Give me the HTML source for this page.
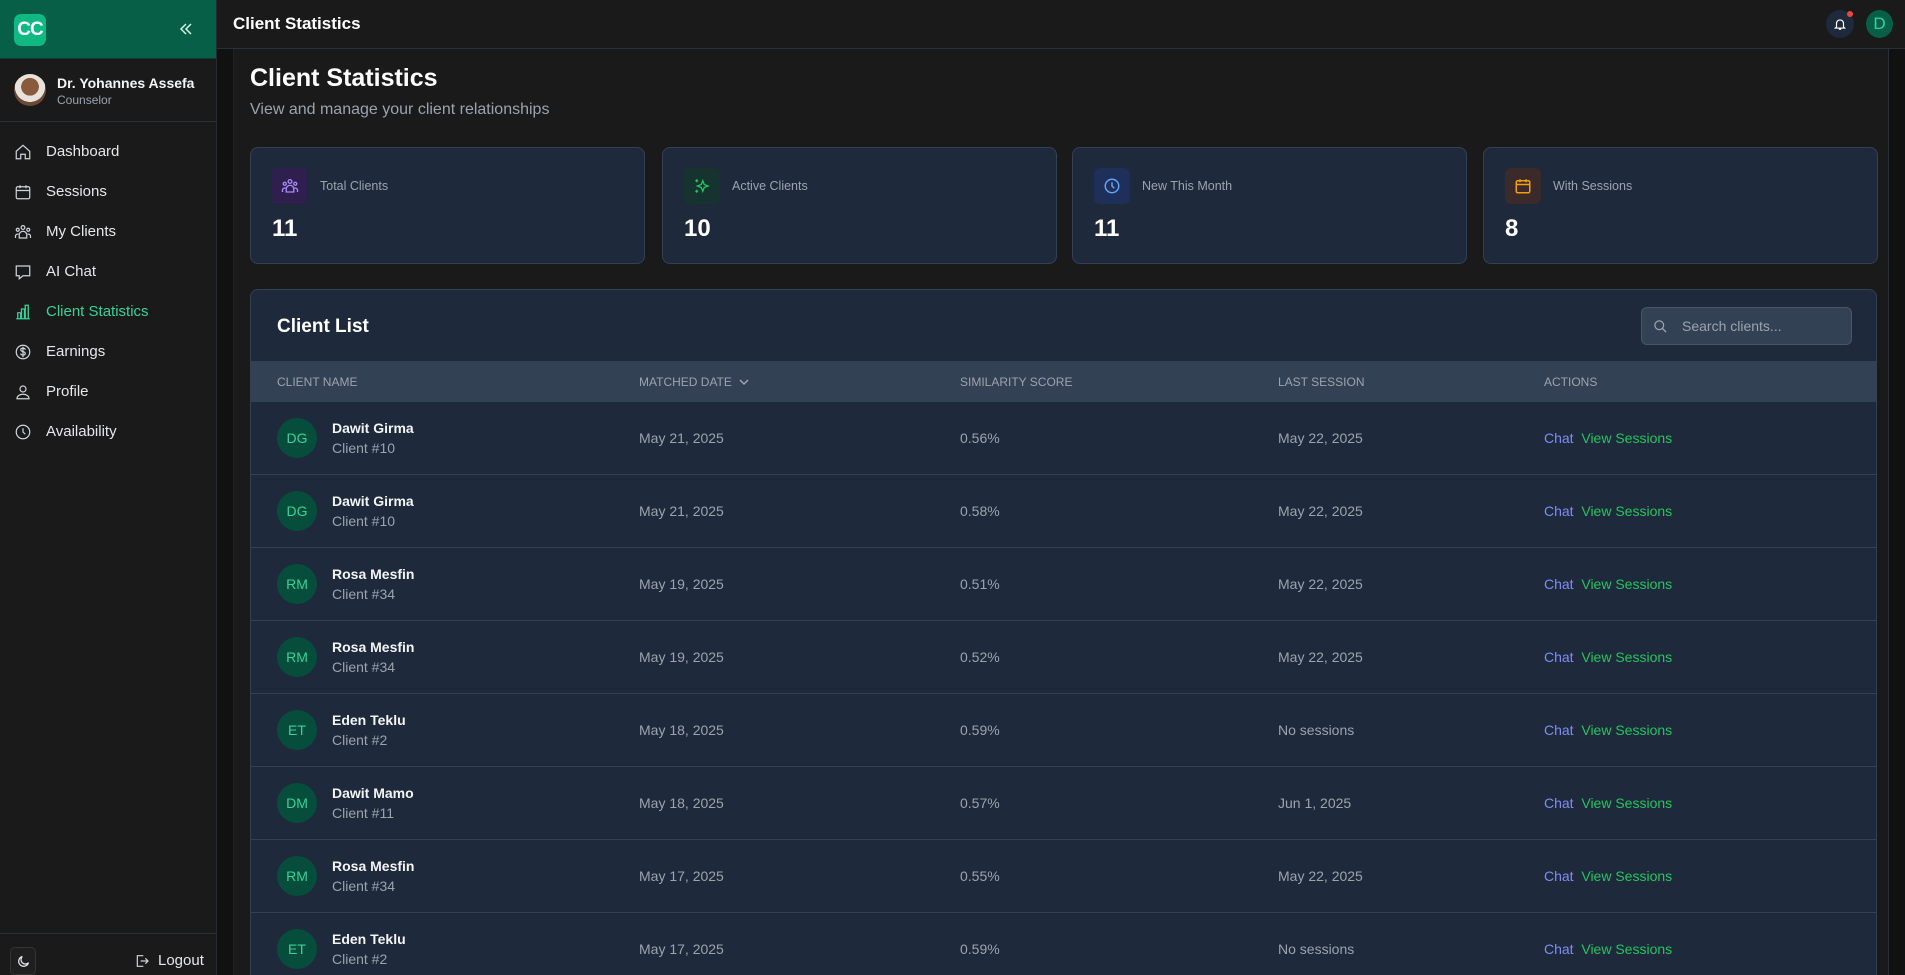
<!DOCTYPE html>
<html style="overflow:hidden;height:975px"><head><meta charset="utf-8">
<style>
*{box-sizing:border-box;margin:0;padding:0}
body{width:1905px;height:975px;overflow:hidden;background:#111111;font-family:"Liberation Sans",sans-serif;color:#e5e7eb;position:relative}
.sb{position:absolute;left:0;top:0;width:217px;height:975px;background:#1a1a1a;border-right:1px solid #262b33}
.sbh{height:59px;background:#065f46;position:relative;border-bottom:1px solid #0b3d2e}
.logo{position:absolute;left:14px;top:14px;width:32px;height:32px;border-radius:7px;background:#10b981;color:#fff;font-weight:bold;font-size:19px;line-height:32px;text-align:center;letter-spacing:-1px}
.prof{position:absolute;left:0;top:59px;width:216px;height:63px;border-bottom:1px solid #2a2f38}
.av{position:absolute;left:14px;top:15px;width:32px;height:32px;border-radius:50%;background:radial-gradient(circle at 50% 40%,#8a5a3c 0 35%,#e8e2dc 36% 60%,#6b4a36 61%)}
.pn{position:absolute;left:57px;top:16px;font-size:14px;font-weight:bold;color:#f3f4f6}
.pr{position:absolute;left:57px;top:34px;font-size:12px;color:#9ca3af}
.nav{position:absolute;left:0;width:216px;height:40px;font-size:15px;color:#e5e7eb}
.nav svg{position:absolute;left:14px;top:11px}
.nav span{position:absolute;left:46px;top:11px}
.nav.act{color:#34d399}
.top{position:absolute;left:217px;top:0;width:1688px;height:49px;background:#1a1a1a;border-bottom:1px solid #2a2f38}
.top h1{position:absolute;left:16px;top:14px;font-size:17px;font-weight:bold;color:#fff}
.bell{position:absolute;left:1609px;top:10px;width:28px;height:28px;border-radius:50%;background:#1e293b}
.dot{position:absolute;left:1630px;top:11px;width:6px;height:6px;border-radius:50%;background:#ef4444}
.uav{position:absolute;left:1649px;top:10px;width:27px;height:28px;border-radius:50%;background:#065f46;color:#34d399;font-size:17px;text-align:center;line-height:28px}
.main{position:absolute;left:233px;top:49px;width:1656px;height:926px;background:#1a1a1a;border-left:1px solid #222;border-right:1px solid #2a2f38}
.card{position:absolute;top:147px;width:395px;height:117px;background:#1e293b;border:1px solid #334155;border-radius:8px}
.ib{position:absolute;left:21px;top:20px;width:36px;height:36px;border-radius:6px}
.ib svg{position:absolute;left:9px;top:9px}
.cl{position:absolute;left:69px;top:31px;font-size:12.5px;color:#9ca3af}
.cn{position:absolute;left:21px;top:67px;font-size:24px;font-weight:bold;color:#fff}
.panel{position:absolute;left:250px;top:289px;width:1627px;height:686px;background:#1e293b;border:1px solid #334155;border-bottom:none;border-radius:8px 8px 0 0;overflow:hidden}
.th{position:absolute;left:0;top:71px;width:100%;height:41px;background:#334155;font-size:12px;color:#9ca3af;text-transform:uppercase}
.th div{position:absolute;top:14px}
.row{position:absolute;left:0;width:100%;height:73px;border-bottom:1px solid #334155;font-size:14px;color:#9ca3af}
.ra{position:absolute;left:26px;top:16px;width:40px;height:40px;border-radius:50%;background:#064e3b;color:#34d399;font-size:14px;text-align:center;line-height:40px}
.rn{position:absolute;left:81px;top:18px;color:#f3f4f6;font-weight:bold;font-size:14px}
.rc{position:absolute;left:81px;top:38px;font-size:14px}
.c{position:absolute;top:28px}
.chat{color:#818cf8}.vs{color:#22c55e}
</style></head><body>
<div class="sb">
 <div class="sbh"><div class="logo">CC</div>
  <svg style="position:absolute;left:178px;top:21px" width="16" height="16" viewBox="0 0 16 16" fill="none" stroke="#d1fae5" stroke-width="1.5"><path d="M8 3L3 8l5 5M13 3L8 8l5 5"/></svg></div>
 <div class="prof"><div class="av"></div><div class="pn">Dr. Yohannes Assefa</div><div class="pr">Counselor</div></div>
 <div class="nav" style="top:132px"><svg width="18" height="18" viewBox="0 0 24 24" fill="none" stroke="#d1d5db" stroke-width="1.6"><path d="M3 11l9-8 9 8v10h-6v-6h-6v6H3z"/></svg><span>Dashboard</span></div>
 <div class="nav" style="top:172px"><svg width="18" height="18" viewBox="0 0 24 24" fill="none" stroke="#d1d5db" stroke-width="1.6"><rect x="3" y="5" width="18" height="16" rx="2"/><path d="M8 3v4M16 3v4M3 10h18"/></svg><span>Sessions</span></div>
 <div class="nav" style="top:212px"><svg width="18" height="18" viewBox="0 0 24 24" fill="none" stroke="#d1d5db" stroke-width="1.6"><circle cx="12" cy="6" r="2.5"/><circle cx="5" cy="9" r="2"/><circle cx="19" cy="9" r="2"/><path d="M7 20v-4a5 5 0 0110 0v4zM2 20v-3a3 3 0 014-2M22 20v-3a3 3 0 00-4-2"/></svg><span>My Clients</span></div>
 <div class="nav" style="top:252px"><svg width="18" height="18" viewBox="0 0 24 24" fill="none" stroke="#d1d5db" stroke-width="1.6"><path d="M3 4h18v13h-9l-5 4v-4H3z"/><path d="M8 10h.01M12 10h.01M16 10h.01"/></svg><span>AI Chat</span></div>
 <div class="nav act" style="top:292px"><svg width="18" height="18" viewBox="0 0 24 24" fill="none" stroke="#34d399" stroke-width="1.8"><path d="M3 21h18M5 21v-8h4v8M10 21V8h4v13M15 21V3h4v18"/></svg><span>Client Statistics</span></div>
 <div class="nav" style="top:332px"><svg width="18" height="18" viewBox="0 0 24 24" fill="none" stroke="#d1d5db" stroke-width="1.6"><circle cx="12" cy="12" r="9"/><path d="M15 9c0-1-1-2-3-2s-3 1-3 2 1 2 3 2.5 3 1.5 3 2.5-1 2-3 2-3-1-3-2M12 5v14"/></svg><span>Earnings</span></div>
 <div class="nav" style="top:372px"><svg width="18" height="18" viewBox="0 0 24 24" fill="none" stroke="#d1d5db" stroke-width="1.6"><circle cx="12" cy="8" r="4"/><path d="M4 21c0-4 4-6 8-6s8 2 8 6z"/></svg><span>Profile</span></div>
 <div class="nav" style="top:412px"><svg width="18" height="18" viewBox="0 0 24 24" fill="none" stroke="#d1d5db" stroke-width="1.6"><circle cx="12" cy="12" r="9"/><path d="M12 7v5l3 3"/></svg><span>Availability</span></div>
 <div style="position:absolute;left:0;top:933px;width:216px;border-top:1px solid #2a2f38"></div>
 <div style="position:absolute;left:10px;top:947px;width:26px;height:28px;border:1px solid #333;border-radius:5px;background:#1f1f1f"><svg style="position:absolute;left:5px;top:6px" width="15" height="15" viewBox="0 0 24 24" fill="none" stroke="#e5e7eb" stroke-width="2"><path d="M20 14A8 8 0 1110 4a6 6 0 0010 10z"/></svg></div>
 <svg style="position:absolute;left:134px;top:953px" width="16" height="16" viewBox="0 0 24 24" fill="none" stroke="#d1d5db" stroke-width="1.8"><path d="M14 4H5v16h9M10 12h11M17 8l4 4-4 4"/></svg>
 <div style="position:absolute;left:158px;top:952px;font-size:15px;color:#e5e7eb">Logout</div>
</div>
<div class="top"><h1>Client Statistics</h1>
 <div class="bell"><svg style="position:absolute;left:7px;top:7px" width="14" height="14" viewBox="0 0 24 24" fill="none" stroke="#fff" stroke-width="2"><path d="M6 17V11a6 6 0 0112 0v6l2 2H4zM10 21h4"/></svg></div>
 <div class="dot"></div><div class="uav">D</div></div>
<div class="main"></div>
<div style="position:absolute;left:250px;top:64px;font-size:25px;font-weight:bold;color:#fff">Client Statistics</div>
<div style="position:absolute;left:250px;top:101px;font-size:16px;color:#9ca3af">View and manage your client relationships</div>

<div class="card" style="left:250px"><div class="ib" style="background:#2e1f4f"><svg width="18" height="18" viewBox="0 0 24 24" fill="none" stroke="#a78bfa" stroke-width="1.8"><circle cx="12" cy="6" r="2.5"/><circle cx="5" cy="9" r="2"/><circle cx="19" cy="9" r="2"/><path d="M7 20v-4a5 5 0 0110 0v4zM2 20v-3a3 3 0 014-2M22 20v-3a3 3 0 00-4-2"/></svg></div><div class="cl">Total Clients</div><div class="cn">11</div></div>
<div class="card" style="left:662px"><div class="ib" style="background:#16332f"><svg width="18" height="18" viewBox="0 0 24 24" fill="none" stroke="#22c55e" stroke-width="1.8"><path d="M13 5l2 5 5 2-5 2-2 5-2-5-5-2 5-2zM5 3v4M3 5h4M5 17v4M3 19h4"/></svg></div><div class="cl">Active Clients</div><div class="cn">10</div></div>
<div class="card" style="left:1072px"><div class="ib" style="background:#1e2f5a"><svg width="18" height="18" viewBox="0 0 24 24" fill="none" stroke="#60a5fa" stroke-width="2"><circle cx="12" cy="12" r="9"/><path d="M12 7v5l3 3"/></svg></div><div class="cl">New This Month</div><div class="cn">11</div></div>
<div class="card" style="left:1483px"><div class="ib" style="background:#3a2a2a"><svg width="18" height="18" viewBox="0 0 24 24" fill="none" stroke="#f59e0b" stroke-width="2"><rect x="3" y="5" width="18" height="16" rx="2"/><path d="M8 3v4M16 3v4M3 10h18"/></svg></div><div class="cl">With Sessions</div><div class="cn">8</div></div>

<div class="panel">
 <div style="position:absolute;left:26px;top:26px;font-size:19px;font-weight:bold;color:#fff">Client List</div>
 <div style="position:absolute;left:1390px;top:17px;width:211px;height:38px;background:#334155;border:1px solid #475569;border-radius:6px">
  <svg style="position:absolute;left:11px;top:11px" width="15" height="15" viewBox="0 0 24 24" fill="none" stroke="#9ca3af" stroke-width="2"><circle cx="10" cy="10" r="7"/><path d="M15 15l6 6"/></svg>
  <div style="position:absolute;left:40px;top:10px;font-size:14px;color:#9ca3af">Search clients...</div></div>
 <div class="th"><div style="left:26px">Client Name</div><div style="left:388px">Matched Date <svg width="12" height="10" viewBox="0 0 12 10" fill="none" stroke="#9ca3af" stroke-width="1.5" style="vertical-align:-1px;margin-left:3px"><path d="M2 3l4 4 4-4"/></svg></div><div style="left:709px">Similarity Score</div><div style="left:1027px">Last Session</div><div style="left:1293px">Actions</div></div>
 <div class="row" style="top:112px"><div class="ra">DG</div><div class="rn">Dawit Girma</div><div class="rc">Client #10</div><div class="c" style="left:388px">May 21, 2025</div><div class="c" style="left:709px">0.56%</div><div class="c" style="left:1027px">May 22, 2025</div><div class="c" style="left:1293px"><span class="chat">Chat</span>&nbsp; <span class="vs">View Sessions</span></div></div>
 <div class="row" style="top:185px"><div class="ra">DG</div><div class="rn">Dawit Girma</div><div class="rc">Client #10</div><div class="c" style="left:388px">May 21, 2025</div><div class="c" style="left:709px">0.58%</div><div class="c" style="left:1027px">May 22, 2025</div><div class="c" style="left:1293px"><span class="chat">Chat</span>&nbsp; <span class="vs">View Sessions</span></div></div>
 <div class="row" style="top:258px"><div class="ra">RM</div><div class="rn">Rosa Mesfin</div><div class="rc">Client #34</div><div class="c" style="left:388px">May 19, 2025</div><div class="c" style="left:709px">0.51%</div><div class="c" style="left:1027px">May 22, 2025</div><div class="c" style="left:1293px"><span class="chat">Chat</span>&nbsp; <span class="vs">View Sessions</span></div></div>
 <div class="row" style="top:331px"><div class="ra">RM</div><div class="rn">Rosa Mesfin</div><div class="rc">Client #34</div><div class="c" style="left:388px">May 19, 2025</div><div class="c" style="left:709px">0.52%</div><div class="c" style="left:1027px">May 22, 2025</div><div class="c" style="left:1293px"><span class="chat">Chat</span>&nbsp; <span class="vs">View Sessions</span></div></div>
 <div class="row" style="top:404px"><div class="ra">ET</div><div class="rn">Eden Teklu</div><div class="rc">Client #2</div><div class="c" style="left:388px">May 18, 2025</div><div class="c" style="left:709px">0.59%</div><div class="c" style="left:1027px">No sessions</div><div class="c" style="left:1293px"><span class="chat">Chat</span>&nbsp; <span class="vs">View Sessions</span></div></div>
 <div class="row" style="top:477px"><div class="ra">DM</div><div class="rn">Dawit Mamo</div><div class="rc">Client #11</div><div class="c" style="left:388px">May 18, 2025</div><div class="c" style="left:709px">0.57%</div><div class="c" style="left:1027px">Jun 1, 2025</div><div class="c" style="left:1293px"><span class="chat">Chat</span>&nbsp; <span class="vs">View Sessions</span></div></div>
 <div class="row" style="top:550px"><div class="ra">RM</div><div class="rn">Rosa Mesfin</div><div class="rc">Client #34</div><div class="c" style="left:388px">May 17, 2025</div><div class="c" style="left:709px">0.55%</div><div class="c" style="left:1027px">May 22, 2025</div><div class="c" style="left:1293px"><span class="chat">Chat</span>&nbsp; <span class="vs">View Sessions</span></div></div>
 <div class="row" style="top:623px"><div class="ra">ET</div><div class="rn">Eden Teklu</div><div class="rc">Client #2</div><div class="c" style="left:388px">May 17, 2025</div><div class="c" style="left:709px">0.59%</div><div class="c" style="left:1027px">No sessions</div><div class="c" style="left:1293px"><span class="chat">Chat</span>&nbsp; <span class="vs">View Sessions</span></div></div>
</div>
</body></html>
